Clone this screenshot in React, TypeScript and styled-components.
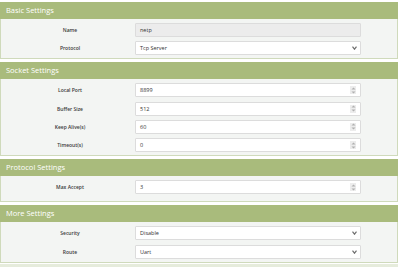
import styled, { createGlobalStyle } from "styled-components";

const GlobalStyle = createGlobalStyle`
  body {
    margin: 0;
    background: #ffffff;
    font-family: "Open Sans", "Liberation Sans", sans-serif;
  }
`;

type Field =
  | { label: string; kind: "text"; value: string; disabled?: boolean }
  | { label: string; kind: "number"; value: string }
  | { label: string; kind: "select"; value: string };

interface ISection {
  title: string;
  fields: Field[];
  extraBottom?: boolean;
}

const sections: ISection[] = [
  {
    title: "Basic Settings",
    fields: [
      { label: "Name", kind: "text", value: "netp", disabled: true },
      { label: "Protocol", kind: "select", value: "Tcp Server" },
    ],
  },
  {
    title: "Socket Settings",
    fields: [
      { label: "Local Port", kind: "number", value: "8899" },
      { label: "Buffer Size", kind: "number", value: "512" },
      { label: "Keep Alive(s)", kind: "number", value: "60" },
      { label: "Timeout(s)", kind: "number", value: "0" },
    ],
  },
  {
    title: "Protocol Settings",
    extraBottom: true,
    fields: [{ label: "Max Accept", kind: "number", value: "3" }],
  },
  {
    title: "More Settings",
    fields: [
      { label: "Security", kind: "select", value: "Disable" },
      { label: "Route", kind: "select", value: "Uart" },
    ],
  },
];

function Spinner() {
  return (
    <SpinBox>
      <svg width="5" height="7" viewBox="0 0 5 7">
        <path d="M2.5 0.5 L4.5 2.6 L0.5 2.6 Z" fill="#b0b0b0" />
        <path d="M2.5 6.5 L4.5 4.4 L0.5 4.4 Z" fill="#b0b0b0" />
      </svg>
    </SpinBox>
  );
}

function Chevron() {
  return (
    <svg width="5" height="4" viewBox="0 0 5 4">
      <path d="M0.5 0.6 L2.5 3.2 L4.5 0.6" fill="none" stroke="#6f6f6f" strokeWidth="1.2" />
    </svg>
  );
}

function FieldRow({ field }: { field: Field }) {
  return (
    <Row>
      <Label>{field.label}</Label>
      <Control $disabled={field.kind === "text" && !!field.disabled}>
        <Value>{field.value}</Value>
        {field.kind === "number" && <Spinner />}
        {field.kind === "select" && <Chevron />}
      </Control>
    </Row>
  );
}

export default function App() {
  return (
    <>
      <GlobalStyle />
      <Page>
        {sections.map((section) => (
          <Panel key={section.title}>
            <PanelHeader>{section.title}</PanelHeader>
            <PanelBody $extraBottom={!!section.extraBottom}>
              {section.fields.map((field) => (
                <FieldRow key={field.label} field={field} />
              ))}
            </PanelBody>
          </Panel>
        ))}
        <BottomStrip />
      </Page>
    </>
  );
}

const Page = styled.div`
  display: flex;
  flex-direction: column;
  gap: 3px;
  padding: 2px 2px 0 0;
`;

const Panel = styled.section`
  border: 1px solid #cfdabb;
  border-top: none;
  background: #f3f5f3;
`;

const PanelHeader = styled.div`
  height: 17px;
  margin: 0 -1px;
  padding-left: 6px;
  background: #a9bb7c;
  color: #ffffff;
  font-size: 7.5px;
  line-height: 17px;
`;

const PanelBody = styled.div<{ $extraBottom: boolean }>`
  display: flex;
  flex-direction: column;
  gap: 4.33px;
  padding: 4px 0 ${(p) => (p.$extraBottom ? "7px" : "3px")};
`;

const Row = styled.div`
  display: flex;
  align-items: center;
  height: 14px;
`;

const Label = styled.div`
  width: 134px;
  padding-left: 4px;
  box-sizing: border-box;
  text-align: center;
  font-size: 5px;
  font-weight: 600;
  color: #3a3a3a;
`;

const Control = styled.div<{ $disabled: boolean }>`
  display: flex;
  align-items: center;
  width: 226px;
  height: 14px;
  box-sizing: border-box;
  padding: 0 3px 0 4px;
  border: 1px solid #dcdcdc;
  border-radius: 1px;
  background: ${(p) => (p.$disabled ? "#ececec" : "#ffffff")};
`;

const Value = styled.span`
  flex: 1;
  font-size: 5.5px;
  color: #333333;
`;

const SpinBox = styled.span`
  display: flex;
  align-items: center;
  justify-content: center;
  width: 6px;
  height: 8px;
  margin-right: 1px;
  background: #ececec;
`;

const BottomStrip = styled.div`
  height: 4px;
  margin-top: -2px;
  background: #e6ecdc;
`;
